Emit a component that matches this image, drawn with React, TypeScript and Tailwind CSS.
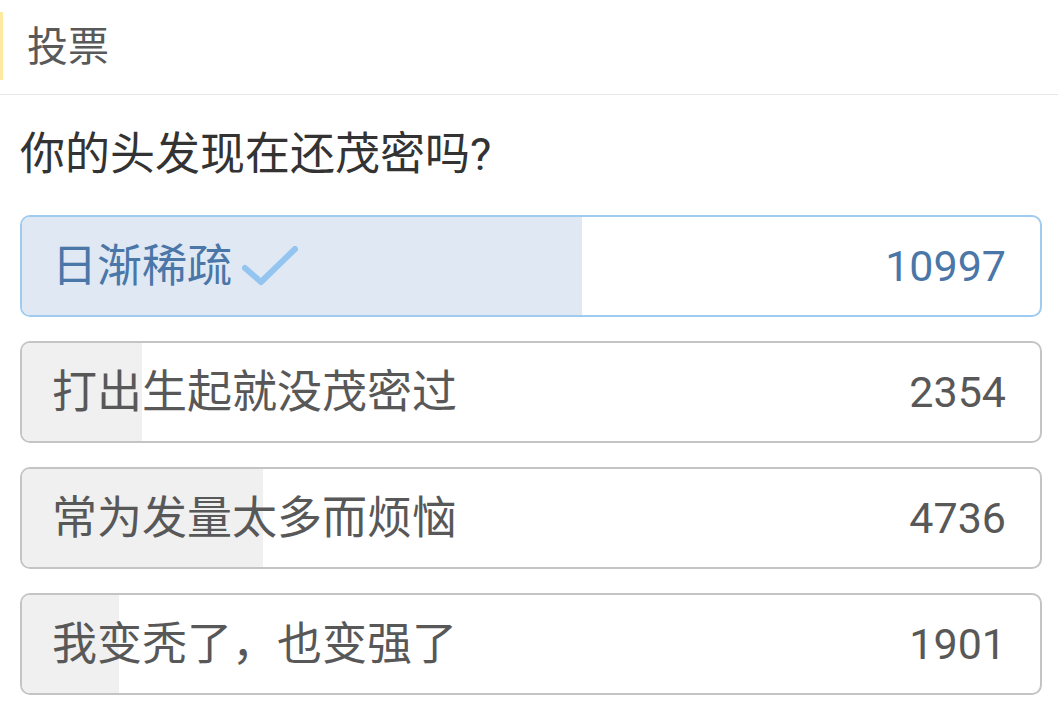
import React from "react";

const options = [
  { label: "日渐稀疏", count: 10997, selected: true },
  { label: "打出生起就没茂密过", count: 2354, selected: false },
  { label: "常为发量太多而烦恼", count: 4736, selected: false },
  { label: "我变秃了，也变强了", count: 1901, selected: false },
];

const total = options.reduce((s, o) => s + o.count, 0);

export default function App() {
  return (
    <div
      className="w-[1058px] h-[719px] bg-white overflow-hidden"
      style={{ fontFamily: 'Roboto, "Noto Sans CJK SC", sans-serif' }}
    >
      <div className="h-[95px] flex items-center border-b border-[#e6e6e6] relative">
        <div className="absolute left-0 top-[12px] w-[3px] h-[68px] bg-[#fde9a0]" />
        <span className="ml-[27px] text-[41px] text-[#595959] leading-none">投票</span>
      </div>
      <div className="pl-[20px] pr-[16px]">
        <div className="h-[120px] flex items-center text-[45px] text-[#333] leading-none pb-[2px]">
          你的头发现在还茂密吗?
        </div>
        <div className="flex flex-col gap-[24px]">
          {options.map((o) => (
            <div
              key={o.label}
              className={
                "relative h-[102px] rounded-[10px] border-2 overflow-hidden flex items-center justify-between pl-[30px] pr-[34px] " +
                (o.selected ? "border-[#9fcbf0]" : "border-[#c4c4c4]")
              }
            >
              <div
                className={"absolute left-0 top-0 bottom-0 " + (o.selected ? "bg-[#dfe8f3]" : "bg-[#f0f0f0]")}
                style={{ width: `${(o.count / total) * 100}%` }}
              />
              <div
                className={
                  "relative flex items-center text-[45px] leading-none " +
                  (o.selected ? "text-[#4a76a8]" : "text-[#585858]")
                }
              >
                <span>{o.label}</span>
                {o.selected && (
                  <svg width="56" height="42" viewBox="0 0 56 42" className="ml-[10px] mt-[2px]">
                    <path d="M3 22 L19 36 L53 3" fill="none" stroke="#93c5f0" strokeWidth="6" strokeLinecap="round" strokeLinejoin="round" />
                  </svg>
                )}
              </div>
              <span
                className={
                  "relative text-[43px] leading-none " + (o.selected ? "text-[#4a76a8]" : "text-[#585858]")
                }
              >
                {o.count}
              </span>
            </div>
          ))}
        </div>
      </div>
    </div>
  );
}
